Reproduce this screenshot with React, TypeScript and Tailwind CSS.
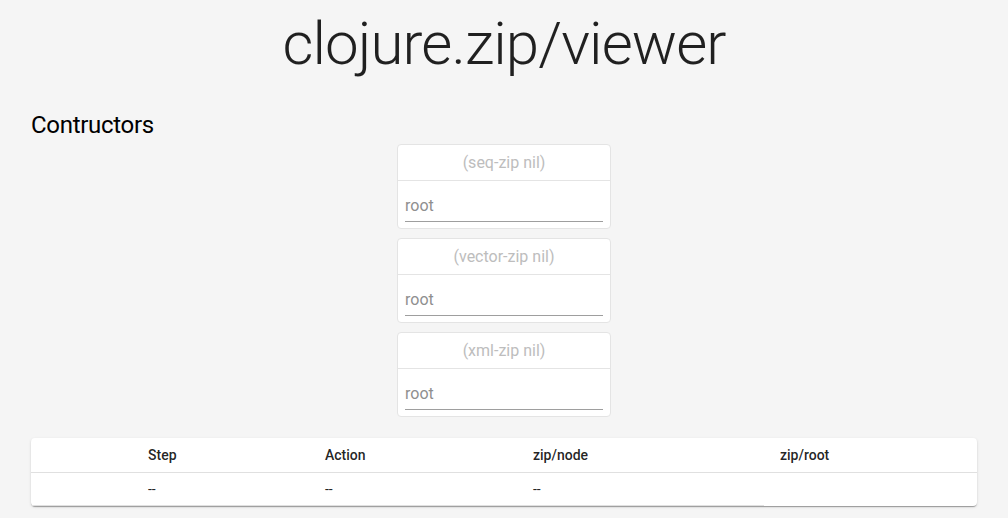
import React from "react";

const cards = ["(seq-zip nil)", "(vector-zip nil)", "(xml-zip nil)"];

function Card({ label }: { label: string }) {
  return (
    <div className="w-[214px] h-[85px] bg-white border border-[#e4e4e4] rounded-[4px] flex flex-col">
      <div className="h-[36px] flex items-center justify-center border-b border-[#e4e4e4] text-[16px] text-[#bdbdbd]">
        {label}
      </div>
      <div className="flex-1 px-[7px] pt-[9px]">
        <div className="h-[32px] border-b border-[#9e9e9e] flex items-center text-[16px] text-[#8f8f8f]">
          root
        </div>
      </div>
    </div>
  );
}

export default function App() {
  return (
    <div
      className="min-h-[518px] bg-[#f5f5f5] text-[rgba(0,0,0,0.87)] pb-[12px]"
      style={{ fontFamily: "Roboto, 'Noto Sans', sans-serif" }}
    >
      <h1 className="pt-[8px] text-center text-[60px] leading-[72px] font-light tracking-[-0.9px]">
        clojure.zip/viewer
      </h1>
      <div className="px-[31px]">
        <h2 className="mt-[29px] text-[24px] leading-[32px] font-normal tracking-[-0.3px] text-black">Contructors</h2>
        <div className="mt-[3px] flex flex-col items-center gap-[9px]">
          {cards.map((c) => (
            <Card key={c} label={c} />
          ))}
        </div>
        <div className="mt-[21px] bg-white rounded-[4px] shadow-[0_2px_1px_-1px_rgba(0,0,0,0.2),0_1px_1px_0_rgba(0,0,0,0.14),0_1px_3px_0_rgba(0,0,0,0.12)] text-[14px]">
          <div className="grid grid-cols-[101px_177px_208px_247px_1fr] h-[35px] border-b border-[#e0e0e0] items-center font-medium">
            <div />
            <div className="pl-[16px]">Step</div>
            <div className="pl-[16px]">Action</div>
            <div className="pl-[16px]">zip/node</div>
            <div className="pl-[16px]">zip/root</div>
          </div>
          <div className="grid grid-cols-[101px_177px_208px_247px_1fr] h-[33px] items-center">
            <div className="h-full border-b border-[#e0e0e0]" />
            <div className="pl-[16px] h-full flex items-center border-b border-[#e0e0e0]">--</div>
            <div className="pl-[16px] h-full flex items-center border-b border-[#e0e0e0]">--</div>
            <div className="pl-[16px] h-full flex items-center border-b border-[#e0e0e0]">--</div>
            <div />
          </div>
        </div>
      </div>
    </div>
  );
}
